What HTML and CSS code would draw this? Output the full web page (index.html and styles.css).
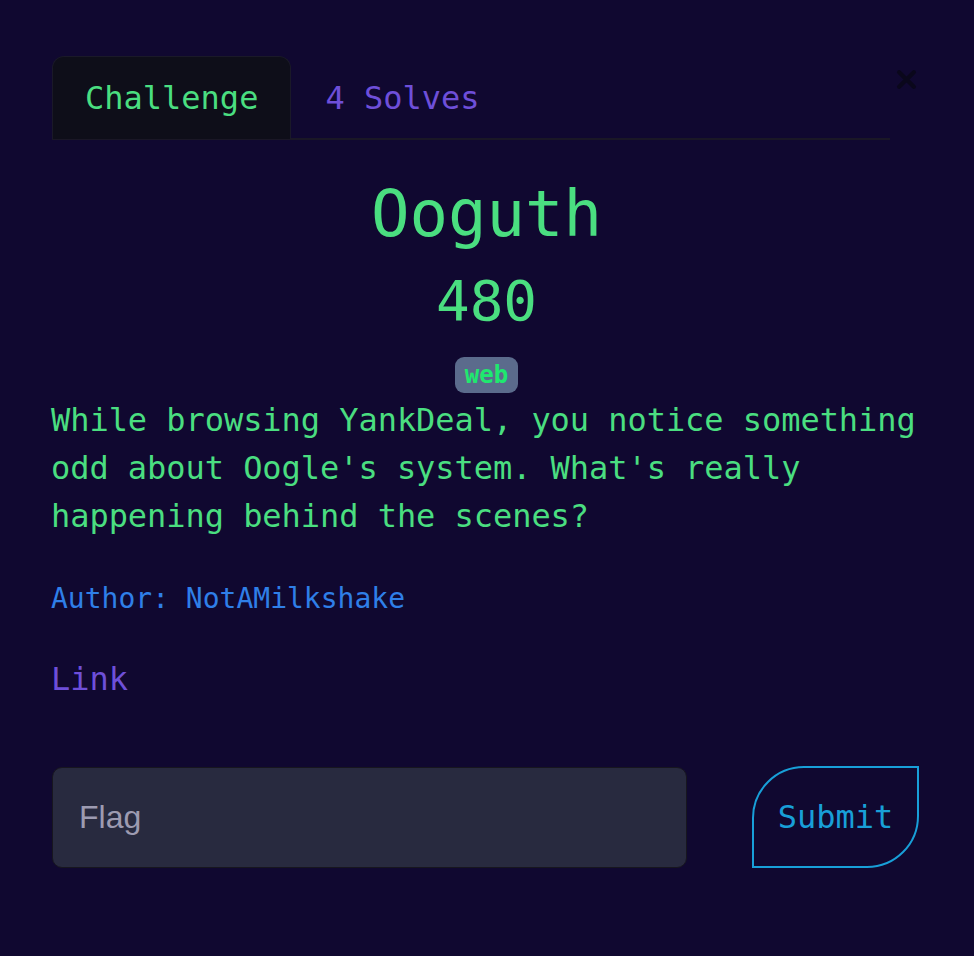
FILE: index.html
```html
<!DOCTYPE html>
<html lang="en">
<head>
<meta charset="utf-8">
<title>Ooguth</title>
<link rel="stylesheet" href="styles.css">
</head>
<body>
<div class="modal">
  <div class="modal-header">
    <ul class="tabs">
      <li class="tab active">Challenge</li>
      <li class="tab">4 Solves</li>
    </ul>
    <button class="close" aria-label="Close">
      <svg width="21" height="21" viewBox="0 0 20 20"><path d="M3 3 L17 17 M17 3 L3 17" stroke="#0a0719" stroke-width="4" stroke-linecap="round" fill="none"/></svg>
    </button>
  </div>
  <h1 class="title">Ooguth</h1>
  <h2 class="value">480</h2>
  <div class="tags"><span class="tag">web</span></div>
  <p class="desc">While browsing YankDeal, you notice something odd about Oogle's system. What's really happening behind the scenes?</p>
  <p class="author">Author: NotAMilkshake</p>
  <a class="link" href="#">Link</a>
  <form class="flag-form" onsubmit="return false">
    <input class="flag-input" type="text" placeholder="Flag">
    <button class="submit" type="submit">Submit</button>
  </form>
</div>
</body>
</html>
```
FILE: styles.css
```css
html, body {
  margin: 0;
  padding: 0;
  background: #100830;
  height: 100%;
}
body {
  font-family: "DejaVu Sans Mono", monospace;
  color: #4ade80;
}
.modal {
  padding: 56px 52px 0 51px;
}
.modal-header {
  display: flex;
  align-items: flex-start;
}
.tabs {
  list-style: none;
  margin: 0 0 0 1px;
  padding: 0;
  display: flex;
  flex: 1;
  border-bottom: 2px solid #1a1726;
}
.tab {
  height: 82px;
  line-height: 82px;
  padding: 0 32px 0 32px;
  font-size: 32px;
  color: #6e4fd9;
  border: 1px solid transparent;
  border-bottom: none;
  border-radius: 12px 12px 0 0;
  margin-bottom: -1px;
}
.tab + .tab {
  padding-left: 33px;
}
.tab.active {
  background: #0e0e19;
  border-color: #1a1928;
  color: #4ade80;
}
.close {
  background: none;
  border: none;
  padding: 0;
  margin: 13px 0 0 0;
  width: 32px;
  height: 21px;
  display: flex;
  justify-content: center;
  opacity: 0.9;
}
.title {
  margin: 29px 0 0;
  text-align: center;
  font-size: 64px;
  font-weight: normal;
  line-height: 90px;
}
.value {
  margin: 6px 0 0;
  text-align: center;
  font-size: 56px;
  font-weight: normal;
  line-height: 72px;
}
.tags {
  display: flex;
  justify-content: center;
  margin-top: 20px;
}
.tag {
  background: #5b6b8c;
  color: #1fe86f;
  font-weight: bold;
  font-size: 24px;
  line-height: 36px;
  padding: 0 10px;
  border-radius: 9px;
}
.desc {
  margin: 3px 0 0;
  font-size: 32px;
  line-height: 48px;
  letter-spacing: -0.05px;
}
.author {
  margin: 38px 0 0;
  font-size: 28px;
  line-height: 42px;
  color: #2f7fe8;
}
.link {
  display: inline-block;
  margin-top: 35px;
  font-size: 32px;
  line-height: 48px;
  color: #6e4fd9;
  text-decoration: none;
}
.flag-form {
  display: flex;
  align-items: center;
  margin-top: 63px;
}
.flag-input {
  box-sizing: border-box;
  width: 635px;
  height: 101px;
  margin-left: 1px;
  background: #282a3f;
  border: 1px solid #17161f;
  border-radius: 10px;
  padding: 0 26px;
  font-family: "Liberation Sans", Arial, sans-serif;
  font-size: 32px;
  color: #ddd;
  outline: none;
}
.flag-input::placeholder {
  color: #9d9bb1;
}
.submit {
  box-sizing: border-box;
  margin-left: 65px;
  width: 167px;
  height: 102px;
  background: transparent;
  border: 2px solid #189fd8;
  border-radius: 52px 0 52px 0;
  font-family: "DejaVu Sans Mono", monospace;
  font-size: 32px;
  color: #189fd8;
  padding: 0;
  text-align: center;
}
```
